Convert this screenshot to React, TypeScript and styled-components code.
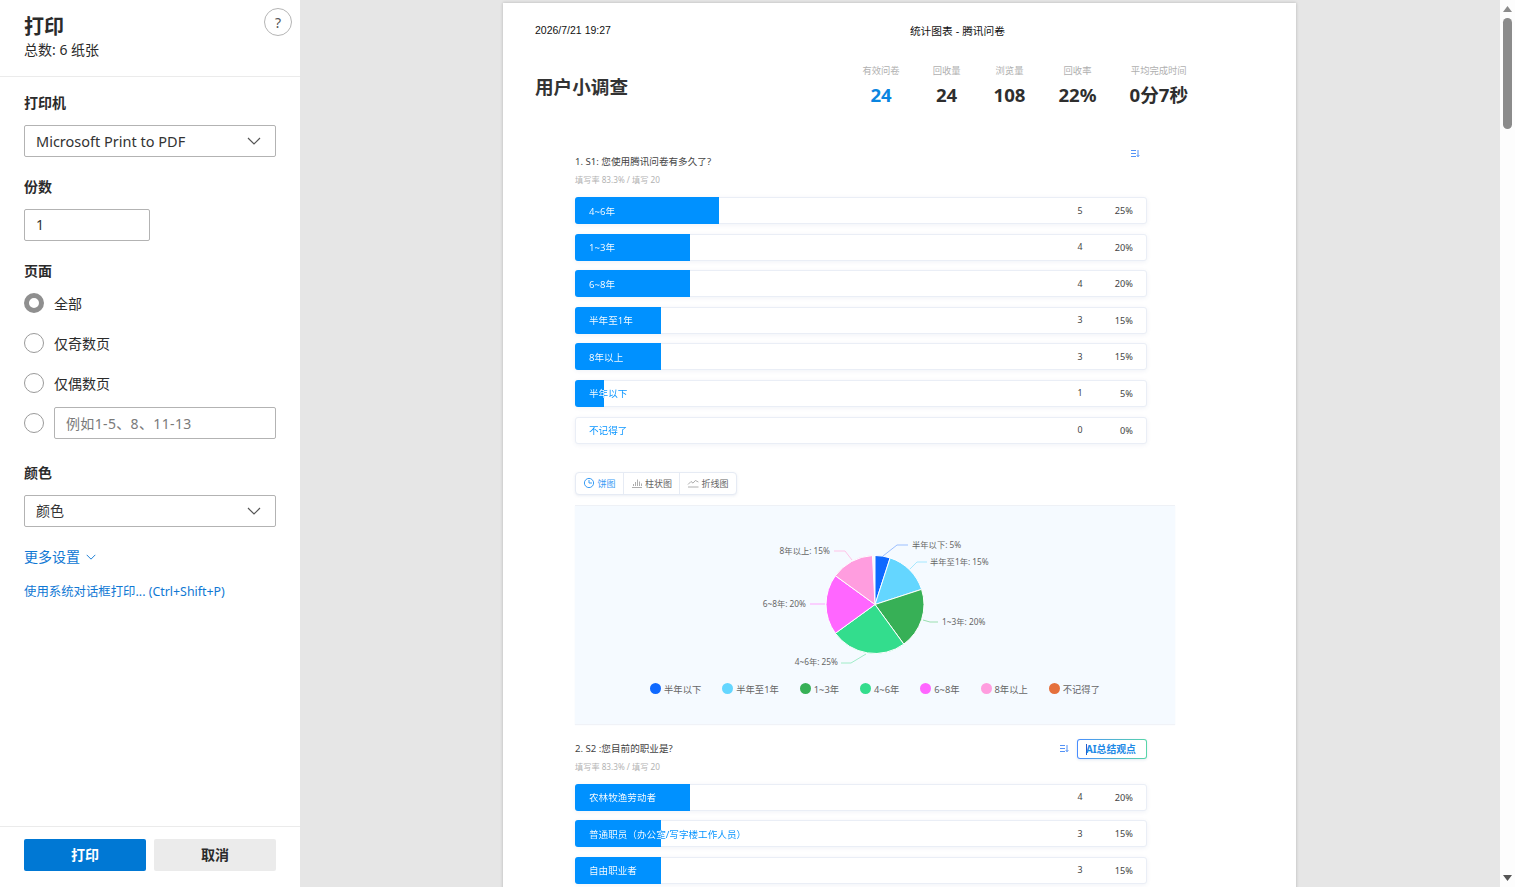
import React from 'react';
import styled, { createGlobalStyle } from 'styled-components';

const CJK = `"Noto Sans", "Noto Sans CJK SC", sans-serif`;

interface BarItem {
  label: string;
  count: number;
  percent: number;
}

interface Slice {
  name: string;
  color: string;
  start: number;
  end: number;
}

const q1Items: BarItem[] = [
  { label: '4~6年', count: 5, percent: 25 },
  { label: '1~3年', count: 4, percent: 20 },
  { label: '6~8年', count: 4, percent: 20 },
  { label: '半年至1年', count: 3, percent: 15 },
  { label: '8年以上', count: 3, percent: 15 },
  { label: '半年以下', count: 1, percent: 5 },
  { label: '不记得了', count: 0, percent: 0 },
];

const q2Items: BarItem[] = [
  { label: '农林牧渔劳动者', count: 4, percent: 20 },
  { label: '普通职员（办公室/写字楼工作人员）', count: 3, percent: 15 },
  { label: '自由职业者', count: 3, percent: 15 },
];

const slices: Slice[] = [
  { name: '半年以下', color: '#0f69ff', start: 0, end: 18 },
  { name: '半年至1年', color: '#64d6ff', start: 18, end: 72 },
  { name: '1~3年', color: '#37b056', start: 72, end: 144 },
  { name: '4~6年', color: '#33dd8d', start: 144, end: 234 },
  { name: '6~8年', color: '#ff66ff', start: 234, end: 306 },
  { name: '8年以上', color: '#ff9ddf', start: 306, end: 357 },
];

const legend = [...slices.map(s => ({ name: s.name, color: s.color })), { name: '不记得了', color: '#e5703c' }];

const stats = [
  { label: '有效问卷', value: '24', primary: true },
  { label: '回收量', value: '24' },
  { label: '浏览量', value: '108' },
  { label: '回收率', value: '22%' },
  { label: '平均完成时间', value: '0分7秒' },
];

const GlobalStyle = createGlobalStyle`
  html, body {
    margin: 0;
    height: 100%;
    overflow: hidden;
    background: #e6e6e6;
  }
  * {
    box-sizing: border-box;
  }
`;

const Shell = styled.div`
  display: flex;
  width: 1515px;
  height: 887px;
  font-family: ${CJK};
  color: #2b2b2b;
`;

const Sidebar = styled.aside`
  width: 300px;
  flex: none;
  display: flex;
  flex-direction: column;
  background: #fff;
`;

const SideHeader = styled.header`
  display: flex;
  justify-content: space-between;
  height: 77px;
  padding: 8px 8px 0 24px;
  border-bottom: 1px solid #ebebeb;
`;

const SideTitle = styled.h1`
  margin: 5px 0 -1px;
  font-size: 20px;
  line-height: 28px;
  font-weight: 700;
`;

const SideSub = styled.div`
  font-size: 14px;
  line-height: 20px;
`;

const HelpButton = styled.div`
  width: 28px;
  height: 28px;
  border: 1px solid #b5b5b5;
  border-radius: 50%;
  display: flex;
  align-items: center;
  justify-content: center;
  font-size: 14px;
  color: #555;
`;

const SideBody = styled.div`
  display: flex;
  flex-direction: column;
  padding: 16px 24px 0;
`;

const FieldLabel = styled.div`
  font-size: 14px;
  line-height: 20px;
  font-weight: 700;
  margin-bottom: 12px;
`;

const Field = styled.div`
  margin-bottom: 20px;
`;

const SelectBox = styled.div`
  height: 32px;
  border: 1px solid #b3b3b3;
  border-radius: 2px;
  display: flex;
  align-items: center;
  justify-content: space-between;
  padding: 0 14px 0 11px;
  font-size: 14.5px;
  color: #333;
`;

const SmallSelectText = styled.span`
  font-size: 14px;
  margin-top: -2px;
`;

const TextBox = styled.div<{ $width?: number; $muted?: boolean }>`
  height: 32px;
  width: ${p => (p.$width ? `${p.$width}px` : 'auto')};
  flex: ${p => (p.$width ? 'none' : 1)};
  border: 1px solid #b3b3b3;
  border-radius: 2px;
  display: flex;
  align-items: center;
  padding: 0 11px 1px;
  font-size: 14px;
  letter-spacing: ${p => (p.$muted ? '0.35px' : '0')};
  color: ${p => (p.$muted ? '#7a7a7a' : '#333')};
`;

const RadioGroup = styled.div`
  margin: -6px 0 24px;
`;

const RadioRow = styled.div`
  display: flex;
  align-items: center;
  gap: 10px;
  height: 32px;
  margin-bottom: 8px;
  font-size: 14px;
  &:last-child {
    margin-bottom: 0;
  }
`;

const Radio = styled.span<{ $checked?: boolean }>`
  width: 20px;
  height: 20px;
  flex: none;
  border-radius: 50%;
  background: #fff;
  border: ${p => (p.$checked ? '5px solid #8f8f8f' : '1px solid #9a9a9a')};
`;

const MoreLink = styled.div`
  display: flex;
  align-items: center;
  gap: 6px;
  font-size: 14px;
  line-height: 20px;
  color: #0f78d4;
`;

const SystemLink = styled.div`
  margin-top: 15px;
  font-size: 12.4px;
  line-height: 20px;
  color: #0f78d4;
`;

const SideFooter = styled.footer`
  margin-top: auto;
  display: flex;
  gap: 8px;
  padding: 12px 24px 16px;
  border-top: 1px solid #ebebeb;
`;

const FootButton = styled.div<{ $primary?: boolean }>`
  flex: 1;
  height: 32px;
  border-radius: 2px;
  display: flex;
  align-items: center;
  justify-content: center;
  padding-bottom: 2px;
  font-size: 14px;
  font-weight: 700;
  background: ${p => (p.$primary ? '#0078d4' : '#ebebeb')};
  color: ${p => (p.$primary ? '#fff' : '#2b2b2b')};
`;

const Stage = styled.main`
  flex: 1;
  height: 887px;
  overflow: hidden;
  display: flex;
  padding: 3px 0 0 203px;
  background: #e6e6e6;
`;

const Sheet = styled.div`
  width: 793px;
  height: 1122px;
  flex: none;
  background: #fff;
  box-shadow: 0 0 3px rgba(0, 0, 0, 0.22);
  padding: 19px 0 0 32px;
`;

const PrintHeader = styled.div`
  display: flex;
  align-items: center;
  height: 15px;
  font-family: "Liberation Sans", ${CJK};
  font-size: 10.5px;
  color: #111;
`;

const PrintTitle = styled.span`
  margin-left: 299px;
  margin-top: 2px;
  font-size: 10.7px;
`;

const SurveyHead = styled.div`
  display: flex;
  justify-content: space-between;
  align-items: center;
  height: 47px;
  margin-top: 25px;
  padding-right: 108px;
`;

const SurveyTitle = styled.h2`
  margin: 3px 0 0;
  font-size: 18.6px;
  line-height: 26px;
  font-weight: 700;
  color: #333;
`;

const StatRow = styled.div`
  display: flex;
  gap: 33px;
`;

const Stat = styled.div`
  display: flex;
  flex-direction: column;
  align-items: center;
`;

const StatLabel = styled.span`
  font-size: 9.3px;
  line-height: 14px;
  color: #b0b0b0;
`;

const StatValue = styled.span<{ $primary?: boolean }>`
  margin-top: 4px;
  font-size: 18.6px;
  line-height: 26px;
  font-weight: 700;
  color: ${p => (p.$primary ? '#0a85e0' : '#2e2e2e')};
`;

const Section = styled.section<{ $top: number }>`
  width: 572px;
  margin: ${p => p.$top}px 0 0 40px;
`;

const QuestionHead = styled.div`
  display: flex;
  align-items: center;
  justify-content: space-between;
  height: 20px;
`;

const QuestionTitle = styled.div`
  font-size: 9.6px;
  line-height: 14px;
  color: #444;
`;

const QuestionTools = styled.div`
  display: flex;
  align-items: center;
  gap: 8px;
`;

const ListIcon = styled.svg<{ $inset?: boolean }>`
  display: block;
  width: 9px;
  height: 9px;
  margin: ${p => (p.$inset ? '-18px 7px 0 0' : '0')};
`;

const AiButton = styled.div`
  position: relative;
  width: 70px;
  height: 20px;
  border-radius: 3px;
  border: 1px solid transparent;
  background: linear-gradient(#fff, #fff) padding-box, linear-gradient(90deg, #4a8dff, #58d6a8) border-box;
  box-shadow: 0 1px 3px rgba(30, 70, 140, 0.12);
  display: flex;
  align-items: center;
  padding-left: 8px;
  font-size: 9.8px;
  font-weight: 700;
  color: #1e8ae6;
  &::before {
    content: '';
    position: absolute;
    left: 8px;
    top: 4px;
    width: 1px;
    height: 11px;
    background: #1f5fd0;
  }
`;

const QuestionMeta = styled.div`
  margin-top: 2px;
  font-size: 8.2px;
  line-height: 12px;
  color: #b3b3b3;
`;

const BarList = styled.div`
  display: flex;
  flex-direction: column;
  gap: 9.6px;
  margin-top: 11px;
`;

const BarRow = styled.div`
  position: relative;
  height: 27px;
  display: flex;
  align-items: center;
  padding: 0 13px;
  border: 1px solid #eaeef6;
  border-radius: 3px;
  background: #fff;
  box-shadow: 0 1px 4px rgba(60, 90, 150, 0.08);
  font-size: 9.6px;
  color: #0091ff;
`;

const BarFill = styled.div`
  position: absolute;
  left: -1px;
  top: -1px;
  bottom: -1px;
  border-radius: 3px 0 0 3px;
  background: #0091ff;
`;

// the text turns white where the fill lies behind it, the split point is set per row
const BarLabel = styled.span`
  position: relative;
  flex: 1;
  white-space: nowrap;
  color: transparent;
  -webkit-background-clip: text;
  background-clip: text;
`;

const BarCount = styled.span`
  position: relative;
  width: 30px;
  text-align: center;
  color: #444;
  font-size: 8.8px;
`;

const BarPercent = styled.span`
  position: relative;
  width: 38px;
  text-align: right;
  color: #444;
  font-size: 9.2px;
`;

const TabGroup = styled.div`
  display: inline-flex;
  margin-top: 28px;
  height: 23px;
  border: 1px solid #e6ebf4;
  border-radius: 4px;
  box-shadow: 0 1px 3px rgba(60, 90, 150, 0.1);
  background: #fff;
`;

const Tab = styled.div<{ $active?: boolean; $width: number }>`
  width: ${p => p.$width}px;
  display: flex;
  align-items: center;
  justify-content: center;
  gap: 2px;
  font-size: 9px;
  color: ${p => (p.$active ? '#3a9cf5' : '#666')};
  & + & {
    border-left: 1px solid #e6ebf4;
  }
`;

const TabIcon = styled.svg`
  width: 12px;
  height: 12px;
  flex: none;
`;

const ChartPanel = styled.div`
  width: 600px;
  height: 219px;
  margin-top: 10px;
  background: #f5faff;
  border-top: 1px solid #eef1f6;
  box-shadow: 0 1px 1px rgba(60, 90, 150, 0.08);
`;

const ChartSvg = styled.svg`
  display: block;
  width: 600px;
  height: 176px;
  font-family: ${CJK};
  font-size: 8.3px;
`;

const Legend = styled.div`
  display: flex;
  justify-content: center;
  gap: 21px;
  height: 14px;
`;

const LegendItem = styled.div`
  display: flex;
  align-items: center;
  gap: 3px;
  font-size: 9.3px;
  color: #666;
`;

const LegendDot = styled.span<{ $color: string }>`
  width: 11px;
  height: 11px;
  border-radius: 50%;
  background: ${p => p.$color};
`;

const Scrollbar = styled.div`
  width: 15px;
  flex: none;
  height: 887px;
  display: flex;
  flex-direction: column;
  align-items: center;
  background: #fdfdfd;
`;

const ScrollArrow = styled.svg<{ $down?: boolean }>`
  width: 9px;
  height: 6px;
  flex: none;
  margin: ${p => (p.$down ? 'auto 0 6px' : '6px 0 0')};
`;

const ScrollThumb = styled.div`
  width: 9px;
  height: 111px;
  margin-top: 6px;
  border-radius: 5px;
  background: #8b8b8b;
`;

const polar = (deg: number, r: number) => {
  const a = ((deg - 90) * Math.PI) / 180;
  return [300 + r * Math.cos(a), 98.5 + r * Math.sin(a)];
};

const slicePath = (s: Slice) => {
  const [x1, y1] = polar(s.start, 49);
  const [x2, y2] = polar(s.end, 49);
  const large = s.end - s.start > 180 ? 1 : 0;
  return `M300 98.5L${x1} ${y1}A49 49 0 ${large} 1 ${x2} ${y2}Z`;
};

// leader lines and labels, coordinates are relative to the chart panel
const callouts = [
  { points: '308,50 322,39 333,39', color: '#9bbfff', x: 337, y: 39, anchor: 'start', text: '半年以下: 5%' },
  { points: '335,63 342,56 352,56', color: '#a6e8ff', x: 355, y: 56, anchor: 'start', text: '半年至1年: 15%' },
  { points: '348,114 355,116 363,116', color: '#9bdfb0', x: 367, y: 116, anchor: 'start', text: '1~3年: 20%' },
  { points: '291,148 276,157 266,157', color: '#a0ecc8', x: 263, y: 156, anchor: 'end', text: '4~6年: 25%' },
  { points: '250,98 235,98', color: '#ffa6ff', x: 231, y: 98, anchor: 'end', text: '6~8年: 20%' },
  { points: '277,54 270,45 259,45', color: '#ffc4e8', x: 255, y: 45, anchor: 'end', text: '8年以上: 15%' },
];

const Chevron: React.FC<{ small?: boolean }> = ({ small }) => (
  <svg width={small ? 10 : 14} height={small ? 6 : 8} viewBox="0 0 14 8" fill="none">
    <path d="M1 1l6 6 6-6" stroke={small ? '#0f78d4' : '#555'} strokeWidth={small ? 1.3 : 1.2} />
  </svg>
);

const SortIcon: React.FC<{ inset?: boolean }> = ({ inset }) => (
  <ListIcon $inset={inset} viewBox="0 0 9 9" fill="none">
    <path d="M0 1.5h5M0 4.5h5M0 7.5h5M7 1v6.5M5.8 6.2L7 7.7l1.3-1.5" stroke="#3f86f5" strokeWidth="0.9" />
  </ListIcon>
);

const Bars: React.FC<{ items: BarItem[] }> = ({ items }) => (
  <BarList>
    {items.map(item => {
      const fill = Math.round(5.72 * item.percent + 0.6);
      const split = fill - 14;
      return (
        <BarRow key={item.label}>
          {item.percent > 0 && <BarFill style={{ width: fill }} />}
          <BarLabel
            style={{ backgroundImage: `linear-gradient(90deg, #fff ${split}px, #0091ff ${split}px)` }}
          >
            {item.label}
          </BarLabel>
          <BarCount>{item.count}</BarCount>
          <BarPercent>{item.percent}%</BarPercent>
        </BarRow>
      );
    })}
  </BarList>
);

const App: React.FC = () => (
  <>
    <GlobalStyle />
    <Shell>
      <Sidebar>
        <SideHeader>
          <div>
            <SideTitle>打印</SideTitle>
            <SideSub>总数: 6 纸张</SideSub>
          </div>
          <HelpButton>?</HelpButton>
        </SideHeader>
        <SideBody>
          <Field>
            <FieldLabel>打印机</FieldLabel>
            <SelectBox>
              Microsoft Print to PDF
              <Chevron />
            </SelectBox>
          </Field>
          <Field>
            <FieldLabel>份数</FieldLabel>
            <TextBox $width={126}>1</TextBox>
          </Field>
          <FieldLabel>页面</FieldLabel>
          <RadioGroup>
            <RadioRow>
              <Radio $checked />
              全部
            </RadioRow>
            <RadioRow>
              <Radio />
              仅奇数页
            </RadioRow>
            <RadioRow>
              <Radio />
              仅偶数页
            </RadioRow>
            <RadioRow>
              <Radio />
              <TextBox $muted>例如1-5、8、11-13</TextBox>
            </RadioRow>
          </RadioGroup>
          <Field>
            <FieldLabel>颜色</FieldLabel>
            <SelectBox>
              <SmallSelectText>颜色</SmallSelectText>
              <Chevron />
            </SelectBox>
          </Field>
          <MoreLink>
            更多设置
            <Chevron small />
          </MoreLink>
          <SystemLink>使用系统对话框打印... (Ctrl+Shift+P)</SystemLink>
        </SideBody>
        <SideFooter>
          <FootButton $primary>打印</FootButton>
          <FootButton>取消</FootButton>
        </SideFooter>
      </Sidebar>

      <Stage>
        <Sheet>
          <PrintHeader>
            <span>2026/7/21 19:27</span>
            <PrintTitle>统计图表 - 腾讯问卷</PrintTitle>
          </PrintHeader>
          <SurveyHead>
            <SurveyTitle>用户小调查</SurveyTitle>
            <StatRow>
              {stats.map(s => (
                <Stat key={s.label}>
                  <StatLabel>{s.label}</StatLabel>
                  <StatValue $primary={s.primary}>{s.value}</StatValue>
                </Stat>
              ))}
            </StatRow>
          </SurveyHead>

          <Section $top={43}>
            <QuestionHead>
              <QuestionTitle>1. S1: 您使用腾讯问卷有多久了?</QuestionTitle>
              <SortIcon inset />
            </QuestionHead>
            <QuestionMeta>填写率 83.3% / 填写 20</QuestionMeta>
            <Bars items={q1Items} />
            <TabGroup>
              <Tab $active $width={47}>
                <TabIcon viewBox="0 0 12 12" fill="none">
                  <circle cx="6" cy="6" r="4.6" stroke="#3a9cf5" />
                  <path d="M6 3v3h3" stroke="#3a9cf5" />
                </TabIcon>
                饼图
              </Tab>
              <Tab $width={56}>
                <TabIcon viewBox="0 0 12 12" fill="none">
                  <path d="M1 10.5h10M2.5 9V7M4.5 9V5M6.5 9V2.5M8.5 9V4.5M10.5 9V6.5" stroke="#999" strokeWidth="0.8" />
                </TabIcon>
                柱状图
              </Tab>
              <Tab $width={57}>
                <TabIcon viewBox="0 0 12 12" fill="none">
                  <path d="M1 10h10.5M1 7.5l3-3 2 1.6 2.4-2.6 3 1.5" stroke="#999" strokeWidth="0.8" />
                </TabIcon>
                折线图
              </Tab>
            </TabGroup>
            <ChartPanel>
              <ChartSvg viewBox="0 0 600 176">
                {slices.map(s => (
                  <path key={s.name} d={slicePath(s)} fill={s.color} stroke="#fff" strokeWidth="1" />
                ))}
                {callouts.map(c => (
                  <g key={c.text}>
                    <polyline points={c.points} fill="none" stroke={c.color} strokeWidth="1" />
                    <text x={c.x} y={c.y + 3} textAnchor={c.anchor} fill="#666">
                      {c.text}
                    </text>
                  </g>
                ))}
              </ChartSvg>
              <Legend>
                {legend.map(l => (
                  <LegendItem key={l.name}>
                    <LegendDot $color={l.color} />
                    {l.name}
                  </LegendItem>
                ))}
              </Legend>
            </ChartPanel>
          </Section>

          <Section $top={15}>
            <QuestionHead>
              <QuestionTitle>2. S2 :您目前的职业是?</QuestionTitle>
              <QuestionTools>
                <SortIcon />
                <AiButton>AI总结观点</AiButton>
              </QuestionTools>
            </QuestionHead>
            <QuestionMeta>填写率 83.3% / 填写 20</QuestionMeta>
            <Bars items={q2Items} />
          </Section>
        </Sheet>
      </Stage>

      <Scrollbar>
        <ScrollArrow viewBox="0 0 9 6">
          <path d="M4.5 0L9 6H0z" fill="#8b8b8b" />
        </ScrollArrow>
        <ScrollThumb />
        <ScrollArrow $down viewBox="0 0 9 6">
          <path d="M4.5 6L0 0h9z" fill="#555" />
        </ScrollArrow>
      </Scrollbar>
    </Shell>
  </>
);

export default App;
